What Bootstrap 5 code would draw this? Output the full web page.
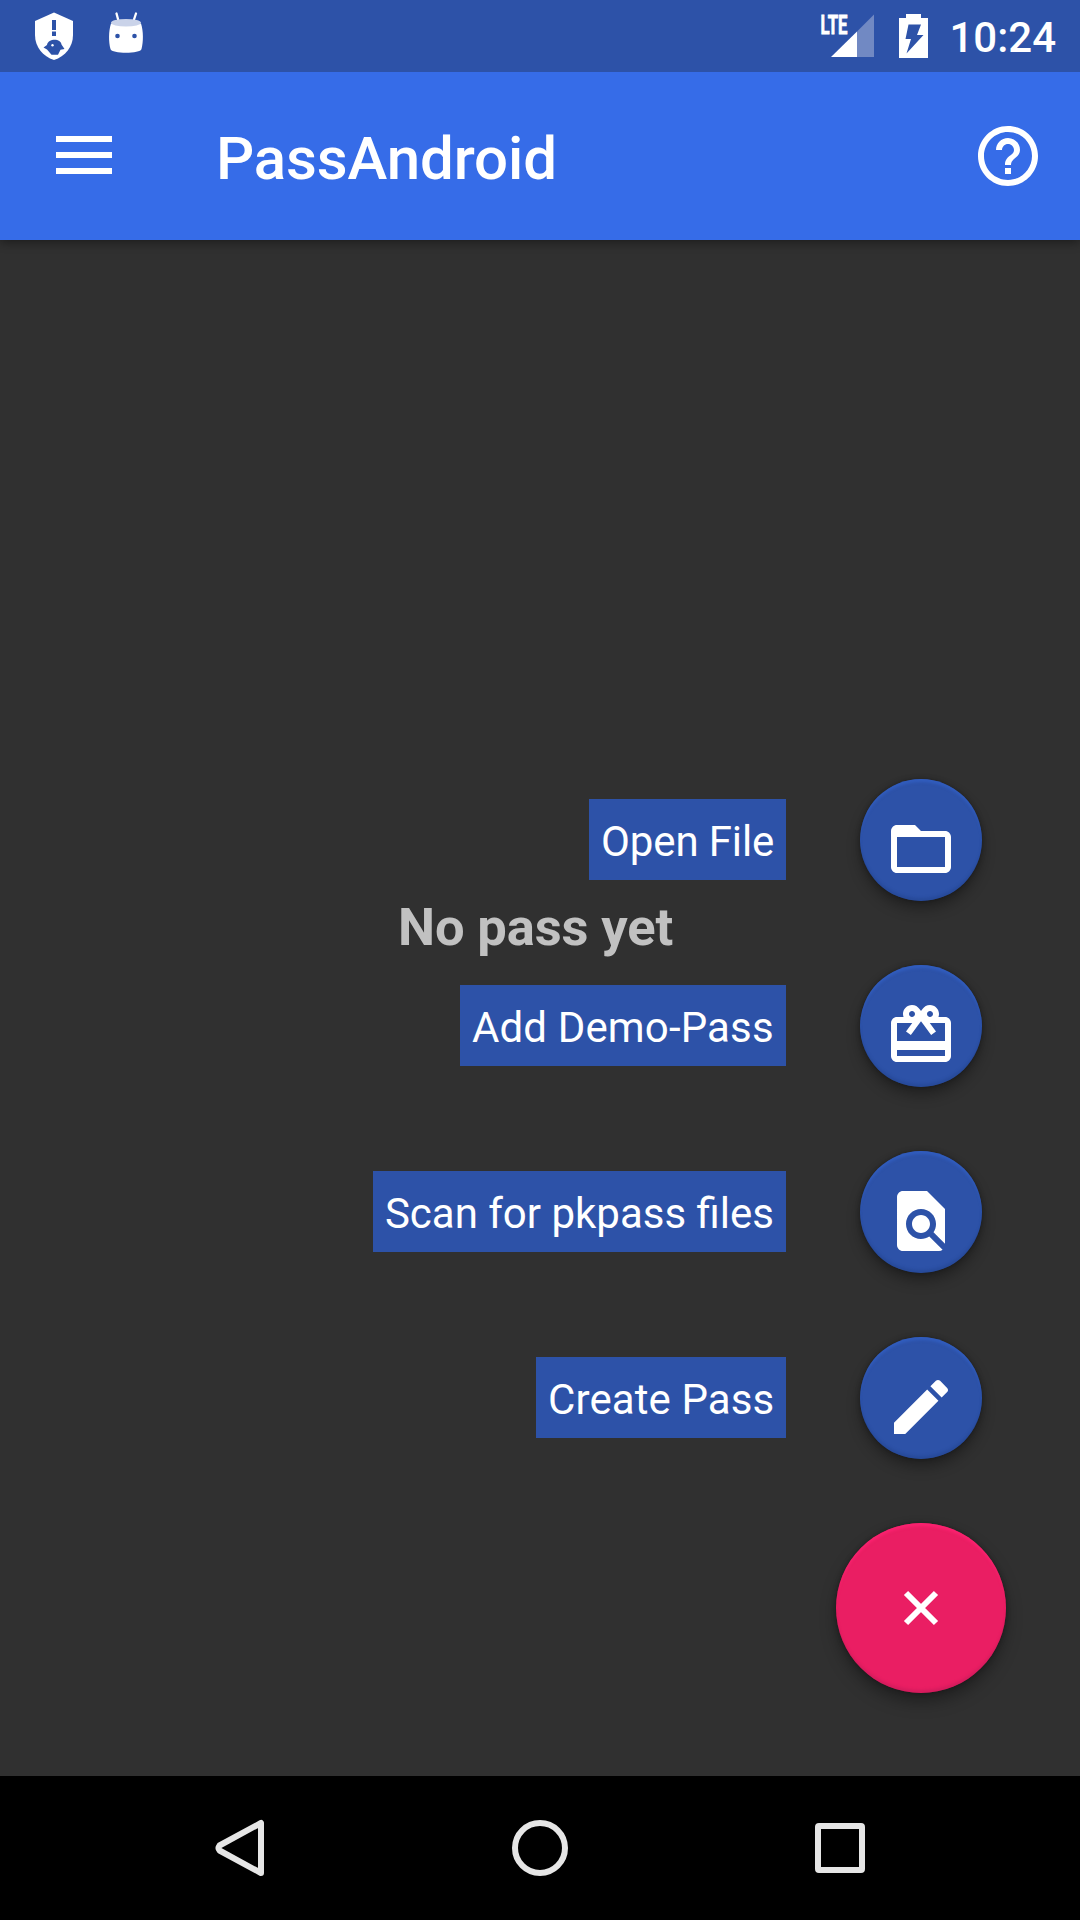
<!DOCTYPE html>
<html lang="en">
<head>
<meta charset="utf-8">
<meta name="viewport" content="width=device-width, initial-scale=1">
<title>PassAndroid</title>
<link href="https://cdn.jsdelivr.net/npm/bootstrap@5.3.0/dist/css/bootstrap.min.css" rel="stylesheet">
<style>
body{font-family:Roboto,"Noto Sans",sans-serif;background:#303030;color:#fff}
.screen{width:1080px;height:1920px}
.statusbar{height:72px;background:#2d52a8;padding:0 24px 0 28px}
.clock{font-size:42px;font-weight:500;line-height:72px;padding-top:3px;margin-left:16px}
.appbar{height:168px;background:#366ce8;padding:0 36px 0 48px;box-shadow:0 2px 10px rgba(0,0,0,.45);clip-path:inset(0 0 -20px 0);z-index:2}
.apptitle{font-size:60px;font-weight:500;line-height:72px;margin-left:96px;padding-top:6px;letter-spacing:-.12px}
.content{background:#303030}
.emptynote{font-size:52.5px;font-weight:700;line-height:60px;color:#c1c1c1;left:398px;top:657px;letter-spacing:-.12px}
.actions{padding:0 74px 83px 0}
.action{height:122px;margin-bottom:64px;padding-right:24px}
.caption{background:#2d52a8;font-size:42px;line-height:49px;padding:18px 12px 14px;height:81px;margin:0 74px 1px 0;white-space:nowrap}
.cap-open{width:197px;letter-spacing:-.12px}
.cap-demo{width:326px;letter-spacing:.14px}
.cap-create{width:250px;letter-spacing:.1px}
.fab{width:122px;height:122px;background:#2d52a8;border:0;padding:17px 1px 0 0;box-shadow:0 8px 14px rgba(0,0,0,.32),0 0 5px rgba(0,0,0,.3),inset 0 4px 3px -1px rgba(52,100,205,.6),inset 0 -4px 3px -1px rgba(30,60,130,.35)}
.fab-main{width:170px;height:170px;background:#ea1e63;padding:0 1px 1px 0;box-shadow:0 9px 16px rgba(0,0,0,.34),0 0 5px rgba(0,0,0,.3),inset 0 4px 3px -1px rgba(255,35,115,.8),inset 0 -4px 3px -1px rgba(180,25,85,.4)}
.navkeys{height:144px;background:#000}
svg{display:block;flex:none}
</style>
</head>
<body>
<div class="screen d-flex flex-column overflow-hidden">
  <div class="statusbar d-flex align-items-center">
    <svg width="124" height="72" viewBox="28 0 124 72">
      <path fill="#fff" d="M54 12.500 73 21v14c0 12-8 21.500-19 25-11-3.500-19-13-19-25V21Z"/>
      <path fill="#2d52a8" d="M52 20h4v10h-4zM52 31.500h4V36h-4z"/>
      <path fill="#2d52a8" d="M43.500 47.500 47 45C48 38 61 38 61.500 44.500l3 4.500-4 .7-2.500 5h-6.500L47 49.500Z"/>
      <circle cx="52.500" cy="45.300" r="1.200" fill="#fff"/>
      <path d="M116.500 13.500 118.500 21M136 13.500 133.500 21" stroke="#fff" stroke-width="2.300" stroke-linecap="round"/>
      <path fill="#fff" d="M111 23.500C108.500 31 108.500 42 110.500 49c1 5 30 5 31 0 2-7 2-18-.5-25.500Z"/>
      <ellipse cx="126" cy="22.800" rx="15" ry="3.800" fill="#cad3e9"/>
      <circle cx="117.500" cy="36" r="2.300" fill="#2d52a8"/><circle cx="134.500" cy="36" r="2.300" fill="#2d52a8"/>
    </svg>
    <svg class="ms-auto" width="116" height="72" viewBox="817 0 116 72">
      <text x="820.500" y="33.500" fill="#fff" stroke="#fff" stroke-width=".8" font-size="26" font-weight="700" textLength="27" lengthAdjust="spacingAndGlyphs">LTE</text>
      <path fill="#7189c3" d="M874 14.500V57H857V31.500Z"/><path fill="#fff" d="M857 31.500V57H831Z"/>
      <path fill="#fff" d="M906 14h15v4h7v40h-29V18h7z"/>
      <path fill="#2d52a8" d="M908.500 24.500H921L917 35h6.500L906.500 53.500 911 39h-5.500z"/>
    </svg>
    <span class="clock">10:24</span>
  </div>
  <header class="appbar d-flex align-items-center position-relative">
    <svg width="72" height="72" viewBox="0 0 72 72" fill="#fff"><path d="M8 16h56v6H8zM8 32h56v6H8zM8 48h56v6H8z"/></svg>
    <div class="apptitle">PassAndroid</div>
    <svg class="ms-auto" width="72" height="72" viewBox="0 0 24 24" fill="#fff"><path d="M11 18h2v-2h-2v2zm1-16C6.480 2 2 6.480 2 12s4.480 10 10 10 10-4.480 10-10S17.520 2 12 2zm0 18c-4.410 0-8-3.590-8-8s3.590-8 8-8 8 3.590 8 8-3.590 8-8 8zm0-14c-2.210 0-4 1.790-4 4h2c0-1.100.9-2 2-2s2 .9 2 2c0 2-3 1.750-3 5h2c0-2.250 3-2.500 3-5 0-2.210-1.790-4-4-4z"/></svg>
  </header>
  <main class="content flex-grow-1 position-relative d-flex flex-column justify-content-end">
    <div class="emptynote position-absolute text-nowrap">No pass yet</div>
    <div class="actions position-relative d-flex flex-column align-items-end">
      <div class="action d-flex align-items-center">
        <span class="caption cap-open">Open File</span>
        <button class="fab rounded-circle d-flex align-items-center justify-content-center" aria-label="Open File"><svg width="72" height="72" viewBox="0 0 24 24" fill="#fff"><path d="M20 6h-8l-2-2H4c-1.100 0-1.990.9-1.990 2L2 18c0 1.100.9 2 2 2h16c1.100 0 2-.9 2-2V8c0-1.100-.9-2-2-2zm0 12H4V8h16v10z"/></svg></button>
      </div>
      <div class="action d-flex align-items-center">
        <span class="caption cap-demo">Add Demo-Pass</span>
        <button class="fab rounded-circle d-flex align-items-center justify-content-center" aria-label="Add Demo-Pass"><svg width="72" height="72" viewBox="0 0 24 24" fill="#fff"><path d="M20 6h-2.180c.11-.31.18-.65.18-1 0-1.660-1.340-3-3-3-1.050 0-1.960.54-2.500 1.350l-.5.670-.5-.68C10.960 2.540 10.050 2 9 2 7.340 2 6 3.340 6 5c0 .35.07.69.18 1H4c-1.110 0-1.990.89-1.990 2L2 19c0 1.110.89 2 2 2h16c1.110 0 2-.89 2-2V8c0-1.110-.89-2-2-2zm-5-2c.55 0 1 .45 1 1s-.45 1-1 1-1-.45-1-1 .45-1 1-1zM9 4c.55 0 1 .45 1 1s-.45 1-1 1-1-.45-1-1 .45-1 1-1zm11 15H4v-2h16v2zm0-5H4V8h5.080L7 10.830 8.620 12 11 8.760l1-1.360 1 1.360L15.380 12 17 10.830 14.920 8H20v6z"/></svg></button>
      </div>
      <div class="action d-flex align-items-center">
        <span class="caption">Scan for pkpass files</span>
        <button class="fab rounded-circle d-flex align-items-center justify-content-center" aria-label="Scan for pkpass files"><svg width="72" height="72" viewBox="0 0 24 24" fill="#fff"><path d="M20 19.590V8l-6-6H6c-1.100 0-1.990.9-1.990 2L4 20c0 1.100.89 2 1.990 2H18c.45 0 .85-.15 1.190-.4l-4.430-4.430c-.8.520-1.740.83-2.760.83-2.760 0-5-2.240-5-5s2.240-5 5-5 5 2.240 5 5c0 1.020-.31 1.960-.83 2.750L20 19.590zM9 13c0 1.660 1.340 3 3 3s3-1.340 3-3-1.340-3-3-3-3 1.340-3 3z"/></svg></button>
      </div>
      <div class="action d-flex align-items-center">
        <span class="caption cap-create">Create Pass</span>
        <button class="fab rounded-circle d-flex align-items-center justify-content-center" aria-label="Create Pass"><svg width="72" height="72" viewBox="0 0 24 24" fill="#fff"><path d="M3 17.250V21h3.750L17.810 9.940l-3.750-3.750L3 17.250zM20.710 7.040c.39-.39.39-1.020 0-1.410l-2.340-2.340c-.39-.39-1.020-.39-1.410 0l-1.830 1.830 3.750 3.750 1.830-1.830z"/></svg></button>
      </div>
      <button class="fab fab-main rounded-circle d-flex align-items-center justify-content-center" aria-label="Close menu"><svg width="72" height="72" viewBox="-36 -36 72 72"><path d="M-15-15 15 15M15-15-15 15" stroke="#fff" stroke-width="6"/></svg></button>
    </div>
  </main>
  <nav class="navkeys d-flex align-items-center justify-content-center">
    <svg width="720" height="144" viewBox="180 1776 720 144" fill="none" stroke="#e6e6e6" stroke-width="6" stroke-linejoin="round">
      <path d="M261 1823v50L219.500 1850.500q-2-2.500 0-5Z"/>
      <circle cx="540" cy="1848" r="25"/>
      <rect x="818" y="1826" width="44" height="44" rx="1"/>
    </svg>
  </nav>
</div>
<script src="https://cdn.jsdelivr.net/npm/bootstrap@5.3.0/dist/js/bootstrap.bundle.min.js"></script>
</body>
</html>
